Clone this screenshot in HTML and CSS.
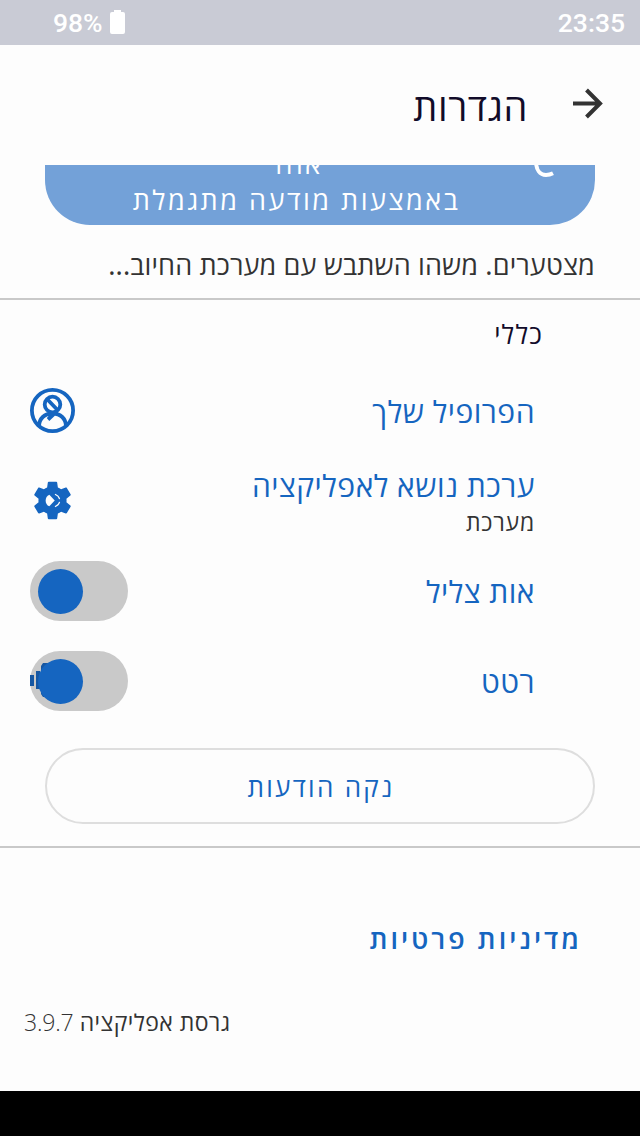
FILE: index.html
```html
<!DOCTYPE html>
<html lang="he" dir="rtl">
<head>
  <meta charset="UTF-8" />
  <meta name="viewport" content="width=device-width, initial-scale=1.0"/>
  <title>הגדרות</title>
  <link rel="stylesheet" href="styles.css">
</head>
<body>
  <div class="status-bar">
    <span class="clock">23:35</span>
    <span class="battery">
      <svg width="15" height="24" viewBox="0 0 15 24"><path d="M4 0h7v2h2a2 2 0 0 1 2 2v18a2 2 0 0 1-2 2H2a2 2 0 0 1-2-2V4a2 2 0 0 1 2-2h2z" fill="#fff"/></svg>
      <span dir="ltr">98%</span>
    </span>
  </div>

  <header class="app-bar">
    <svg class="back" width="32" height="32" viewBox="0 0 32 32" fill="none" stroke="#333" stroke-width="4"><path d="M1 15.500h28M14.500 2l13.500 13.500L14.500 29"/></svg>
    <h1>הגדרות</h1>
  </header>

  <section class="promo">
    <button class="ad-button">
      <span class="ad-text">אחד<br>באמצעות מודעה מתגמלת</span>
      <svg class="ad-icon" width="40" height="40" viewBox="0 0 40 40" fill="none" stroke="#fff" stroke-width="4"><path d="M6 22C6 31 10 36 16 36c3 0 5-.7 7-1.700"/></svg>
    </button>
  </section>
  <p class="billing-error">מצטערים. משהו השתבש עם מערכת החיוב...</p>

  <section class="general">
    <h2>כללי</h2>
    <div class="row">
      <span class="label">הפרופיל שלך</span>
      <svg width="45" height="45" viewBox="0 0 45 45" fill="none" stroke="#1565c0" stroke-width="3.800">
        <circle cx="22.500" cy="22.500" r="20.600"/>
        <circle cx="22.500" cy="16.500" r="7.800"/>
        <path d="M9 38.500c0-8 5.500-13 13.500-13S36 30.500 36 38.500M17 11l11.500 12M27 23l-9 8.500"/>
      </svg>
    </div>
    <div class="row">
      <div class="label">ערכת נושא לאפליקציה<small>מערכת</small></div>
      <svg width="45" height="45" viewBox="0 0 24 24" fill="#1565c0">
        <path d="M19.430 12.980c.04-.32.07-.64.07-.98s-.03-.66-.07-.98l2.110-1.650c.19-.15.24-.42.12-.64l-2-3.460c-.12-.22-.39-.3-.61-.22l-2.490 1c-.52-.4-1.080-.73-1.690-.98l-.38-2.650A.49.49 0 0 0 14 2h-4c-.25 0-.46.18-.49.42l-.38 2.650c-.61.25-1.170.59-1.690.98l-2.490-1c-.23-.09-.49 0-.61.22l-2 3.460c-.13.22-.07.49.12.64l2.110 1.650c-.04.32-.07.65-.07.98s.03.66.07.98l-2.110 1.650c-.19.15-.24.42-.12.64l2 3.460c.12.22.39.3.61.22l2.490-1c.52.4 1.080.73 1.690.98l.38 2.650c.03.24.24.42.49.42h4c.25 0 .46-.18.49-.42l.38-2.650c.61-.25 1.170-.59 1.690-.98l2.490 1c.23.09.49 0 .61-.22l2-3.460c.12-.22.07-.49-.12-.64z"/>
        <path d="M10.300 8.900l2.900 3.100-2.900 3.100C7.700 14.200 7.700 9.800 10.300 8.900z" fill="#fdfdfd"/>
        <path d="M13.300 8.700q2 .8 2.500 2.600M13.300 15.300q2-.8 2.500-2.600" fill="none" stroke="#fdfdfd" stroke-width=".6"/>
      </svg>
    </div>
    <div class="row">
      <span class="label">אות צליל</span>
      <span class="switch"></span>
    </div>
    <div class="row">
      <span class="label">רטט</span>
      <span class="switch">
        <svg class="vibrate" width="30" height="36" viewBox="0 0 30 36" fill="#1557a3"><path d="M0 13h4v11H0zM6 9h4v18H6zM11 4l2-3h17v34H13l-2-3z"/></svg>
      </span>
    </div>
    <button class="clear-button">נקה הודעות</button>
  </section>

  <a class="privacy">מדיניות פרטיות</a>
  <p class="version">גרסת אפליקציה <span>3.9.7</span></p>
  <div class="nav-bar"></div>
</body>
</html>
```
FILE: styles.css
```css
* {
  box-sizing: border-box;
}

body {
  margin: 0;
  height: 1136px;
  display: flex;
  flex-direction: column;
  overflow: hidden;
  background-color: #fdfdfd;
  color: #333;
  font-family: "Noto Sans", "Open Sans", sans-serif;
}

.status-bar {
  display: flex;
  justify-content: space-between;
  align-items: center;
  height: 45px;
  padding: 0 15px 0 53px;
  background-color: #c9cbd5;
  color: white;
  font: 500 26.5px Roboto, sans-serif;
}

.battery {
  display: flex;
  align-items: center;
  gap: 7px;
}

.battery svg {
  margin-bottom: 2px;
}

.app-bar {
  display: flex;
  align-items: center;
  height: 120px;
  padding: 0 36px 0 0;
}

.back {
  margin-bottom: 2px;
}

h1 {
  margin: 2px 44px 0 0;
  font-size: 38px;
  font-weight: 400;
  letter-spacing: 0.6px;
  color: #110b29;
}

.promo {
  display: flex;
  align-items: flex-end;
  height: 60px;
  margin: 0 45px;
  overflow: hidden;
}

.ad-button {
  position: relative;
  flex: none;
  width: 100%;
  height: 120px;
  padding: 0;
  border: none;
  border-radius: 45px;
  background-color: #73a1d8;
  color: white;
  font: 400 27px/36px "Noto Sans", "Open Sans", sans-serif;
  letter-spacing: 2.5px;
}

.ad-text {
  display: block;
  margin-top: 33px;
  margin-right: 47px;
}

.ad-icon {
  position: absolute;
  right: 25px;
  top: 34px;
}

.billing-error {
  margin: 0;
  height: 75px;
  padding: 20px 45px 0;
  font-size: 27px;
  line-height: 40px;
  letter-spacing: 0.13px;
  border-bottom: 2px solid #c9c9c9;
}

.general {
  height: 548px;
  border-bottom: 2px solid #c9c9c9;
}

h2 {
  margin: 0;
  height: 65px;
  padding: 14px 97px 0 0;
  font-size: 26px;
  line-height: 40px;
  font-weight: 400;
  letter-spacing: 1.2px;
  color: #110b29;
}

.row {
  display: flex;
  justify-content: space-between;
  align-items: center;
  height: 90px;
  padding: 0 105px 0 30px;
}

.label {
  padding-top: 3px;
  color: #1565c0;
  font-size: 30px;
  line-height: 40px;
  letter-spacing: 0.5px;
}

.label small {
  display: block;
  color: #333;
  font-size: 23px;
  line-height: 32px;
  letter-spacing: 0.8px;
}

.switch {
  position: relative;
  top: 1px;
  width: 98px;
  height: 60px;
  border-radius: 30px;
  background-color: #c9c9c9;
}

.switch::after {
  content: "";
  position: absolute;
  left: 7.5px;
  top: 7.5px;
  width: 45px;
  height: 45px;
  border-radius: 50%;
  background-color: #1565c0;
}

.vibrate {
  position: absolute;
  left: 0;
  top: 11px;
}

.clear-button {
  display: block;
  width: 550px;
  height: 76px;
  margin: 23px auto 0;
  padding: 1px 0 0 2px;
  border: 2px solid #dedede;
  border-radius: 38px;
  background: none;
  color: #1565c0;
  font: 400 26px "Noto Sans", "Open Sans", sans-serif;
  letter-spacing: 2.3px;
}

.privacy {
  height: 154px;
  padding: 71px 58px 0;
  color: #1565c0;
  font-size: 27px;
  line-height: 40px;
  font-weight: 600;
  letter-spacing: 3px;
}

.version {
  margin: 0;
  padding-left: 24px;
  text-align: left;
  font-size: 23px;
  line-height: 40px;
  letter-spacing: 0.4px;
}

.version span {
  font-family: "Open Sans", sans-serif;
  font-weight: 300;
  letter-spacing: -0.2px;
}

.nav-bar {
  height: 45px;
  margin-top: auto;
  background-color: black;
}
```
